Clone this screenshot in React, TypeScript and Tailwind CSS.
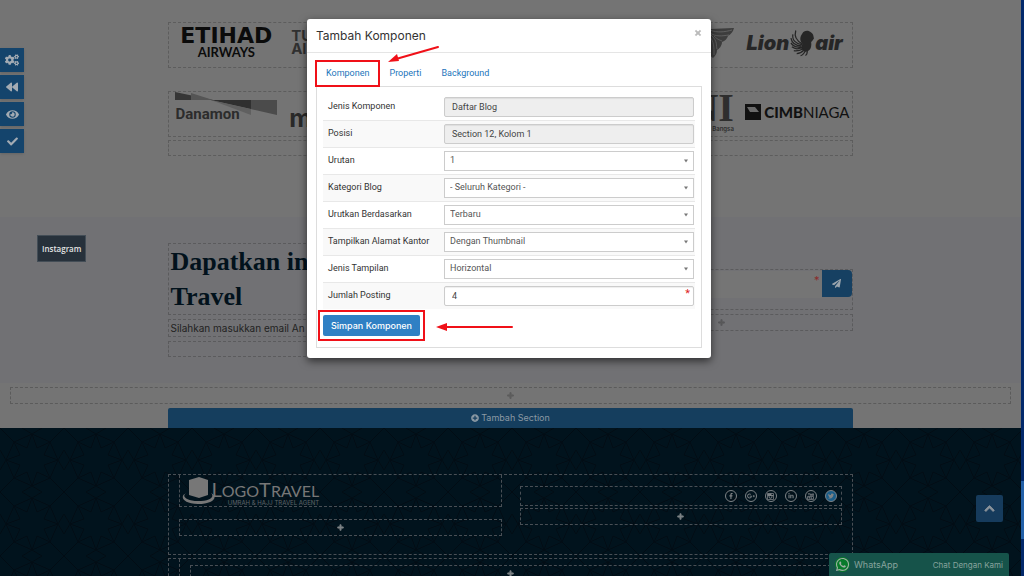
import type { ReactNode } from "react";
import {
  FaBackward,
  FaCheck,
  FaChevronUp,
  FaCogs,
  FaEye,
  FaFacebookF,
  FaGooglePlusG,
  FaLinkedinIn,
  FaPaperPlane,
  FaPlus,
  FaPlusCircle,
  FaTimes,
  FaTwitter,
  FaWhatsapp,
} from "react-icons/fa";

const tools = [
  { label: "Pengaturan", icon: <FaCogs size={14} /> },
  { label: "Kembali", icon: <FaBackward size={12} /> },
  { label: "Lihat", icon: <FaEye size={13} /> },
  { label: "Simpan", icon: <FaCheck size={11} /> },
];

const fields = [
  { id: "jenis", label: "Jenis Komponen", type: "readonly", value: "Daftar Blog" },
  { id: "posisi", label: "Posisi", type: "readonly", value: "Section 12, Kolom 1" },
  { id: "urutan", label: "Urutan", type: "select", value: "1" },
  { id: "kategori", label: "Kategori Blog", type: "select", value: "- Seluruh Kategori -" },
  { id: "urut", label: "Urutkan Berdasarkan", type: "select", value: "Terbaru" },
  { id: "alamat", label: "Tampilkan Alamat Kantor", type: "select", value: "Dengan Thumbnail" },
  { id: "tampilan", label: "Jenis Tampilan", type: "select", value: "Horizontal" },
  { id: "jumlah", label: "Jumlah Posting", type: "text", value: "4" },
];

const Slot = ({ className = "", children }: { className?: string; children?: ReactNode }) => (
  <div className={`border border-dashed ${className}`}>{children}</div>
);

const Plus = () => <FaPlus size={7} stroke="currentColor" strokeWidth={50} />;

const Toolbar = () => (
  <div className="absolute top-12 left-0 flex flex-col gap-[3px]">
    {tools.map((tool) => (
      <button
        key={tool.label}
        type="button"
        aria-label={tool.label}
        className="flex h-6 w-6 items-center justify-center bg-[#14446c] text-[#a3abb3] shadow-sm"
      >
        {tool.icon}
      </button>
    ))}
  </div>
);

const Airlines = () => (
  <Slot className="grid h-[46px] grid-cols-6 border-[#5d5d5d]">
    <div className="flex flex-col items-center pt-[5px] leading-none text-[#0b0b0b]">
      <span className="font-['DejaVu_Sans'] text-[22px] leading-4 font-bold">ETIHAD</span>
      <span className="mt-0.5 font-['Lato'] text-[13px] leading-3 font-bold">AIRWAYS</span>
    </div>
    <div className="flex flex-col pt-1.5 pl-2 font-['Inter'] text-[15px] leading-[13px] font-bold text-[#303030]">
      <span>TU</span>
      <span>AI</span>
    </div>
    <div />
    <div />
    <div className="flex justify-end pt-1 pr-1">
      <svg width="32" height="32" viewBox="0 0 32 32" fill="#3d3d3d">
        <path d="M0 1 C9 3 18 1 32 1 C31 5 29 7 26 9 C25 12 23 14 20 15 C20 19 17 22 15 23 C15 27 13 29 11 31 C8 29 6 25 3 22 Z" />
        <path
          d="M8 3 C15 6 23 5 30 3 M8 6 C14 10 20 9 27 8 M8 10 C12 15 12 20 12 28 M9 8 C16 14 14 19 15 22 M12 9 C16 13 18 13 20 14"
          fill="none"
          stroke="#686868"
          strokeWidth="0.8"
        />
      </svg>
    </div>
    <div className="flex items-center justify-center pb-1 font-['Inter'] text-[20px] font-black text-[#262626] italic">
      <span>Lion</span>
      <svg width="26" height="28" viewBox="0 0 27 28" fill="#262626" className="shrink-0">
        <path d="M14 4 C15 1 20 0 23 3 C26 5 25 7 26 9 C24 12 24 12 23 13 C24 20 21 23 17 23 C13 22 12 18 14 15 C11 12 11 8 14 4 Z" />
        <path
          d="M7 1 C5 8 8 12 14 15 M4 5 C3 11 7 15 14 16 M2 9 C3 14 7 17 13 17 M2 14 C5 18 8 19 13 18 M3 18 C7 21 10 20 14 19 M5 22 C9 23 11 22 15 20 M8 25 C11 25 13 24 16 21 M12 27 C14 27 16 24 17 22 M17 27 C19 26 19 24 19 22"
          fill="none"
          stroke="#262626"
          strokeWidth="1.300"
        />
      </svg>
      <span>air</span>
    </div>
  </Slot>
);

const Banks = () => (
  <Slot className="grid h-[46px] grid-cols-6 border-[#5d5d5d]">
    <div className="flex flex-col pl-1.5 text-[#2c2c2c]">
      <svg width="103" height="23" viewBox="0 0 103 23" className="shrink-0">
        <path d="M0 0 L38 8 H0 Z" fill="#363636" />
        <path d="M16 1 L38 8 H16 Z" fill="#555" />
        <path d="M36 8 H102 V23 Z" fill="#4b4b4b" />
        <path d="M36 8 H76 V17 Z" fill="#303030" />
        <path d="M36 8 L76 17 V23 Z" fill="#606060" />
      </svg>
      <span className="-mt-2.5 font-['Roboto'] text-[15px] leading-[18px] font-bold">Danamon</span>
    </div>
    <div className="pt-2.5 pl-1.5 font-['Inter'] text-[25px] leading-8 font-bold text-[#292929]">m</div>
    <div />
    <div />
    <div className="flex flex-col items-end pr-1 text-[#2e2e2e]">
      <span className="font-['Liberation_Serif'] text-[40px] leading-[31px] font-bold">NI</span>
      <span className="pt-0.5 font-['Inter'] text-[6px] leading-[8px] font-semibold">Bangsa</span>
    </div>
    <div className="flex items-center justify-end gap-[3px] pt-0.5 pr-0.5 pb-1.5 text-[#111]">
      <svg width="16" height="16" viewBox="0 0 16 16" className="shrink-0">
        <path d="M0 0 H16 V16 H0 Z" fill="#111" />
        <path d="M2 3 H10 L14 8 H5 Z" fill="#6b6b6b" />
      </svg>
      <span className="font-['Lato'] text-[15px] leading-4">
        <b className="font-black">CIMB</b>NIAGA
      </span>
    </div>
  </Slot>
);

const Newsletter = () => (
  <section className="shrink-0 bg-[#717174] pt-[26px] pb-[26px]">
    <div className="mx-auto flex w-[67%] gap-2.5">
      <div className="flex flex-1 flex-col gap-1">
        <Slot className="border-[#5b5b5d] px-px">
          <h2 className="font-['Liberation_Serif'] text-[26px] leading-[35px] font-bold text-[#02121c]">
            Dapatkan in
            <br />
            Travel
          </h2>
        </Slot>
        <Slot className="border-[#5b5b5d] px-px">
          <p className="text-[10px] leading-4 text-[#222]">Silahkan masukkan email An</p>
        </Slot>
        <Slot className="h-4 border-[#5b5b5d]" />
      </div>
      <div className="flex w-[262px] flex-col gap-1 pt-[26px]">
        <Slot className="flex h-[41px] items-start border-[#5b5b5d]">
          <div className="relative flex-1">
            <input type="email" aria-label="Email" className="h-[27px] w-full bg-[#757575] px-2 text-[10px] outline-none" />
            <span className="absolute top-1 right-0.5 text-[11px] leading-3 text-[#8b2b2b]">*</span>
          </div>
          <button
            type="button"
            aria-label="Kirim"
            className="flex h-[27px] w-[30px] items-center justify-center rounded-r-sm bg-[#164062] text-[#9ba5ad]"
          >
            <FaPaperPlane size={9} />
          </button>
        </Slot>
        <Slot className="flex h-[17px] items-center justify-center border-[#5b5b5d] text-[#58585a]">
          <Plus />
        </Slot>
      </div>
    </div>
  </section>
);

const LogoTravel = () => (
  <div className="flex items-start text-[#777]">
    <svg width="33" height="28" viewBox="0 0 33 28" fill="#777" className="shrink-0">
      <path d="M7 3 L17 0 L26 3 V18 L17 21 L7 18 Z" />
      <path d="M5 16 C-1 18 3 24 16 24 C28 24 33 20 29 16 C37 20 31 27 16 27 C0 27 -3 18 5 16 Z" />
    </svg>
    <div className="-ml-1 pt-1 font-['Lato']">
      <div className="text-[20px] leading-4">
        L<span className="text-[16px]">OGO</span>T<span className="text-[16px]">RAVEL</span>
      </div>
      <div className="text-right font-['Inter'] text-[6px] leading-[8px] text-[#5d6468]">
        UMRAH &amp; HAJJ TRAVEL AGENT
      </div>
    </div>
  </div>
);

const socials = [
  { label: "Facebook", icon: <FaFacebookF size={6} /> },
  { label: "Google Plus", icon: <FaGooglePlusG size={8} /> },
  {
    label: "Instagram",
    icon: (
      <svg width="7" height="7" viewBox="0 0 14 14">
        <path d="M1 1 H13 V13 H1 Z" fill="none" stroke="currentColor" strokeWidth="1.500" />
        <path d="M1 1 H9 V4 H13 V6 H1 Z" fill="currentColor" />
        <circle cx="7" cy="7.500" r="3" fill="none" stroke="currentColor" strokeWidth="2" />
      </svg>
    ),
  },
  { label: "LinkedIn", icon: <FaLinkedinIn size={6} /> },
  {
    label: "YouTube",
    icon: (
      <svg width="7" height="7" viewBox="0 0 14 14" fill="none" stroke="currentColor" strokeWidth="1.500">
        <path d="M2 0 L4 3 L6 0 M4 3 V5 M7 2 H9 V5 H7 Z M11 1 V5 H13 V1" />
        <path d="M1 7 H13 V13 H1 Z M3 9 H6 M4.500 9 V12 M8 8 V12 M8 10 H10 V12" />
      </svg>
    ),
  },
];

const Footer = () => (
  <footer className="relative flex-1 bg-[#01131d] pt-[46px] text-[#7d8285]">
    <svg className="absolute inset-0 h-full w-full" aria-hidden="true">
      <defs>
        <pattern id="stars" width="64" height="64" patternUnits="userSpaceOnUse">
          <g fill="none" stroke="#020c14" strokeWidth="1">
            <path d="M32 6 L37 20 L50 14 L44 27 L58 32 L44 37 L50 50 L37 44 L32 58 L27 44 L14 50 L20 37 L6 32 L20 27 L14 14 L27 20 Z" />
            <path d="M32 6 L50 14 L58 32 L50 50 L32 58 L14 50 L6 32 L14 14 Z" />
            <path d="M0 0 L14 14 M64 0 L50 14 M0 64 L14 50 M64 64 L50 50 M0 22 L6 32 L0 42 M64 22 L58 32 L64 42 M22 0 L32 6 L42 0 M22 64 L32 58 L42 64" />
          </g>
        </pattern>
      </defs>
      <rect width="100%" height="100%" fill="url(#stars)" />
    </svg>
    <div className="relative mx-auto flex w-[67%] flex-col gap-[3px]">
      <Slot className="flex h-[81px] gap-[18px] border-[#494f55] px-2.5">
        <div className="flex flex-1 flex-col gap-3">
          <Slot className="h-8 border-t-0 border-[#494f55] pt-0.5 pl-0.5">
            <LogoTravel />
          </Slot>
          <Slot className="flex h-[17px] items-center justify-center border-[#494f55]">
            <Plus />
          </Slot>
        </div>
        <div className="flex flex-1 flex-col gap-0.5 pt-[11px]">
          <Slot className="flex h-5 items-center justify-end gap-2 border-[#494f55] pr-1">
            {socials.map((s) => (
              <a
                key={s.label}
                href="#"
                aria-label={s.label}
                className="flex h-3 w-3 items-center justify-center rounded-full border border-[#7d8285]"
              >
                {s.icon}
              </a>
            ))}
            <a
              href="#"
              aria-label="Twitter"
              className="flex h-3 w-3 items-center justify-center rounded-full border border-[#7d8285] bg-[#1b5d88]"
            >
              <FaTwitter size={6} />
            </a>
          </Slot>
          <Slot className="flex h-[17px] items-center justify-center border-[#494f55]">
            <Plus />
          </Slot>
        </div>
      </Slot>
      <Slot className="h-16 border-[#494f55] px-2.5">
        <div className="h-full border-x border-dashed border-[#494f55] px-2.5 pt-1.5">
          <Slot className="flex h-[17px] items-center justify-center border-[#494f55]">
            <Plus />
          </Slot>
        </div>
      </Slot>
    </div>
  </footer>
);

const Field = ({ field }: { field: (typeof fields)[number] }) => (
  <div className="flex h-[27px] items-center border-t border-[#e8e8e8] pr-px pl-[5px] first:border-transparent even:bg-[#f9f9f9]">
    <label htmlFor={field.id} className="flex-1 whitespace-nowrap">
      {field.label}
    </label>
    <div className="relative w-[250px]">
      {field.type === "select" ? (
        <>
          <select
            id={field.id}
            className="block h-5 w-full appearance-none border border-[#ccc] bg-white px-[5px] text-[#555] outline-none"
          >
            <option>{field.value}</option>
          </select>
          <svg width="4" height="4" viewBox="0 0 5 4" className="pointer-events-none absolute top-2 right-1.5">
            <path d="M0 0 H5 L2.500 4 Z" fill="#777" />
          </svg>
        </>
      ) : (
        <input
          id={field.id}
          type="text"
          defaultValue={field.value}
          readOnly={field.type === "readonly"}
          className="block h-5 w-full rounded-xs border border-[#ccc] bg-white px-[7px] text-[#444] shadow-[inset_0_1px_1px_rgba(0,0,0,0.07)] outline-none read-only:bg-[#eee]"
        />
      )}
      {field.type === "text" && (
        <span className="absolute top-0.5 right-1 text-[11px] leading-3 text-[#d22]">*</span>
      )}
    </div>
  </div>
);

const Modal = () => (
  <div className="absolute inset-0 flex items-start justify-center pt-[19px] pr-1.5">
    <div
      role="dialog"
      aria-label="Tambah Komponen"
      className="relative w-[404px] rounded-[3px] bg-white pb-2.5 font-['Roboto'] text-[9px] text-[#333] shadow-[0_3px_9px_rgba(0,0,0,0.6)]"
    >
      <div className="flex h-[34px] items-center justify-between border-b border-[#e5e5e5] px-[9px]">
        <h4 className="font-['Inter'] text-[12px]">Tambah Komponen</h4>
        <button type="button" aria-label="Tutup" className="pb-1.5 text-[#bbb]">
          <FaTimes size={8} stroke="currentColor" strokeWidth={40} />
        </button>
      </div>
      <div className="px-[9px] pt-2">
        <nav className="flex h-[25px] items-center text-[#1b75bb]">
          <div className="relative flex h-full items-center px-2.5">
            <a href="#komponen">Komponen</a>
            <div className="pointer-events-none absolute -inset-x-px -inset-y-px border-2 border-[#f01018]" />
          </div>
          <a href="#properti" className="px-2.5">
            Properti
          </a>
          <a href="#background" className="px-2.5">
            Background
          </a>
        </nav>
        <form className="border border-[#ddd] px-1.5 pt-1.5 pb-[11px]">
          {fields.map((field) => (
            <Field key={field.id} field={field} />
          ))}
          <div className="relative mt-1.5 inline-block align-top">
            <button
              type="button"
              className="block h-[21px] rounded-xs bg-[#2f80c4] px-2 font-['Inter'] font-medium text-white"
            >
              Simpan Komponen
            </button>
            <div className="pointer-events-none absolute -inset-[5px] border-2 border-[#f01018]" />
          </div>
        </form>
      </div>
      <svg width="54" height="20" viewBox="0 0 54 20" className="pointer-events-none absolute top-[25px] left-20">
        <path d="M51 3 L9 15" stroke="#f01018" strokeWidth="2" strokeLinecap="round" />
        <path d="M1 18 L10 10 L12 17 Z" fill="#f01018" />
      </svg>
      <svg width="80" height="10" viewBox="0 0 80 10" className="pointer-events-none absolute bottom-[26px] left-32">
        <path d="M8 5 H77" stroke="#f01018" strokeWidth="2" strokeLinecap="round" />
        <path d="M1 5 L12 1 V9 Z" fill="#f01018" />
      </svg>
    </div>
  </div>
);

const App = () => {
  return (
    <div className="relative flex h-screen overflow-hidden bg-[#747474] font-['Inter',sans-serif]">
      <main className="relative flex min-w-0 flex-1 flex-col">
        <section className="shrink-0 pt-[22px] pb-[61px]">
          <div className="mx-auto w-[67%]">
            <Airlines />
            <div className="h-[23px]" />
            <Banks />
            <Slot className="mt-[3px] h-4 border-[#5d5d5d]" />
          </div>
        </section>
        <Newsletter />
        <section className="shrink-0 px-2.5 pt-1">
          <Slot className="flex h-[17px] items-center justify-center border-[#5b5b5b] text-[#5c5c5c]">
            <Plus />
          </Slot>
        </section>
        <button
          type="button"
          className="mx-auto mt-1 flex h-5 w-[67%] shrink-0 items-center justify-center gap-0.5 rounded-t-xs bg-[#153e5e] text-[9px] text-[#8b99a4]"
        >
          <FaPlusCircle size={8} />
          Tambah Section
        </button>
        <Footer />

        <Toolbar />
        <span className="absolute top-[235px] left-[37px] border border-[#434d56] bg-[#27313b] px-1 py-1 font-['Open_Sans'] text-[8px] leading-[17px] font-semibold text-[#e4e4e4]">
          Instagram
        </span>
        <button
          type="button"
          aria-label="Ke atas"
          className="absolute right-[18px] bottom-[54px] flex h-[27px] w-[27px] items-center justify-center rounded-xs bg-[#163b5c] text-[#8a939b]"
        >
          <FaChevronUp size={11} stroke="currentColor" strokeWidth={40} />
        </button>
        <a
          href="#whatsapp"
          className="absolute right-3 bottom-0 flex h-[23px] w-[180px] items-center justify-between rounded-t-xs bg-[#16534a] px-1.5 text-[#86a39d]"
        >
          <span className="flex items-center gap-1 text-[9px]">
            <span className="flex h-[15px] w-[15px] items-center justify-center rounded-full bg-[#087a2a] text-[#9fb0a5]">
              <FaWhatsapp size={15} />
            </span>
            WhatsApp
          </span>
          <span className="text-[8px]">Chat Dengan Kami</span>
        </a>
      </main>
      <div className="flex w-[3px] flex-col bg-[#02296b]">
        <div className="mt-auto mb-[37px] h-[58px] bg-[#2260a8]" />
      </div>
      <Modal />
    </div>
  );
};

export default App;
